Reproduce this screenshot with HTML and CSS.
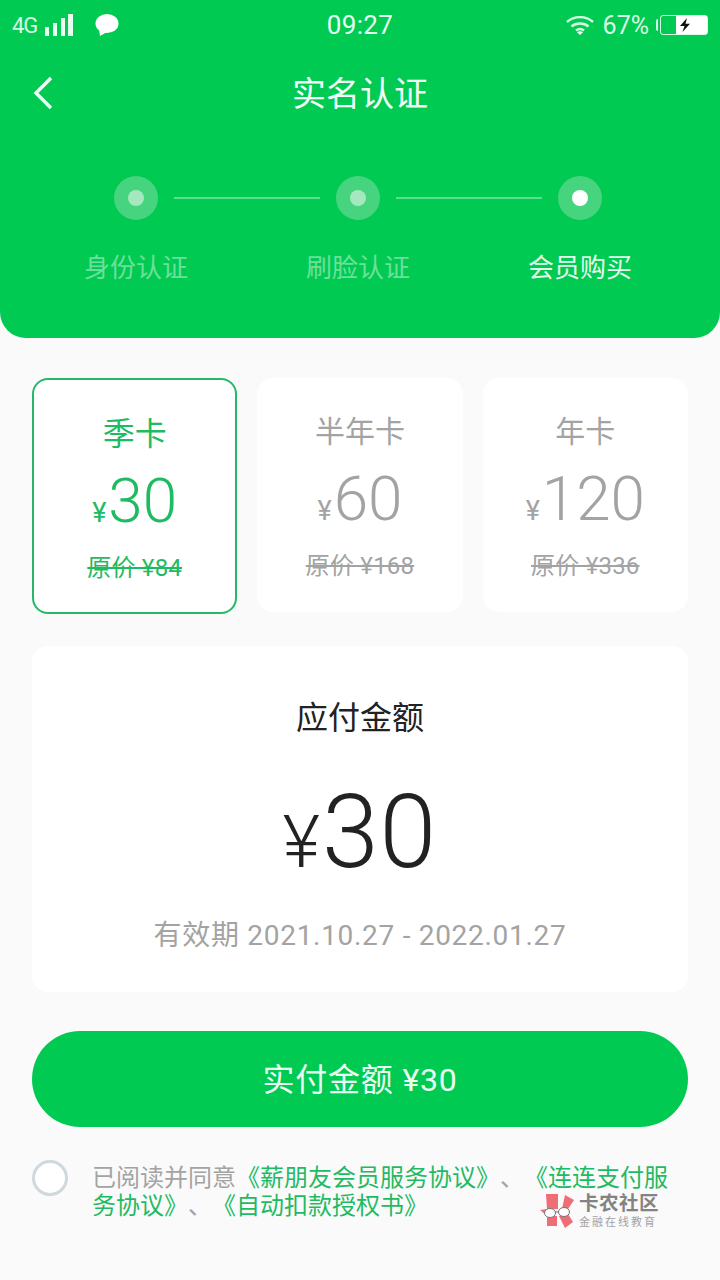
FILE: index.html
```html
<!DOCTYPE html>
<html lang="zh-CN">
<head>
    <meta charset="UTF-8">
    <meta name="viewport" content="width=device-width, initial-scale=1.0">
    <title>实名认证</title>
    <link rel="stylesheet" href="styles.css">
</head>
<body>

    <header class="header">
        <div class="status-bar">
            <div class="status-left">
                <span class="network">4G</span>
                <svg class="signal" width="28" height="22" viewBox="0 0 28 22">
                    <rect x="0" y="13" width="4" height="9" fill="#e6fff0"/>
                    <rect x="8" y="9" width="4" height="13" fill="#e6fff0"/>
                    <rect x="16" y="4" width="4" height="18" fill="#e6fff0"/>
                    <rect x="23" y="0" width="5" height="22" fill="#e6fff0"/>
                </svg>
                <svg class="bubble" width="24" height="22" viewBox="0 0 24 22">
                    <ellipse cx="12" cy="9.5" rx="11.5" ry="9.5" fill="#fff"/>
                    <path d="M4 15 L5 22 L12 18 Z" fill="#fff"/>
                </svg>
            </div>
            <div class="status-time">09:27</div>
            <div class="status-right">
                <svg class="wifi" width="28" height="20" viewBox="0 0 28 20">
                    <path d="M1 7 C8 0.5 20 0.5 27 7" fill="none" stroke="#d8fbe6" stroke-width="2.4"/>
                    <path d="M5.5 11.5 C10 7.5 18 7.5 22.5 11.5" fill="none" stroke="#d8fbe6" stroke-width="2.4"/>
                    <path d="M10 15.5 C12.5 13.5 15.5 13.5 18 15.5" fill="none" stroke="#d8fbe6" stroke-width="2.4"/>
                    <path d="M11 17.2 L14 20 L17 17.2 C15 16 13 16 11 17.2 Z" fill="#fff"/>
                </svg>
                <span class="battery-text">67%</span>
                <span class="battery-nub"></span>
                <div class="battery">
                    <div class="battery-fill">
                        <svg width="12" height="14" viewBox="0 0 12 14">
                            <path d="M8 0 L1 8 L5.5 8 L3.5 14 L11 5.8 L6.5 5.8 Z" fill="#111"/>
                        </svg>
                    </div>
                </div>
            </div>
        </div>

        <div class="nav-bar">
            <svg class="back" width="20" height="34" viewBox="0 0 20 34">
                <path d="M18 2 L3 17 L18 32" fill="none" stroke="#f2fff7" stroke-width="3.4"/>
            </svg>
            <h1 class="nav-title">实名认证</h1>
        </div>

        <div class="step-track">
            <div class="step-dot"><span class="step-core"></span></div>
            <div class="step-line"></div>
            <div class="step-dot"><span class="step-core"></span></div>
            <div class="step-line"></div>
            <div class="step-dot"><span class="step-core active"></span></div>
        </div>
        <div class="step-labels">
            <span>身份认证</span>
            <span>刷脸认证</span>
            <span class="active">会员购买</span>
        </div>
    </header>

    <section class="plans">
        <div class="plan selected">
            <div class="plan-name">季卡</div>
            <div class="plan-price"><span class="yen">¥</span>30</div>
            <div class="plan-origin">原价 ¥84</div>
        </div>
        <div class="plan">
            <div class="plan-name">半年卡</div>
            <div class="plan-price"><span class="yen">¥</span>60</div>
            <div class="plan-origin">原价 ¥168</div>
        </div>
        <div class="plan">
            <div class="plan-name">年卡</div>
            <div class="plan-price"><span class="yen">¥</span>120</div>
            <div class="plan-origin">原价 ¥336</div>
        </div>
    </section>

    <section class="summary">
        <div class="summary-title">应付金额</div>
        <div class="summary-price"><span class="summary-yen">¥</span>30</div>
        <div class="summary-date">有效期 2021.10.27 - 2022.01.27</div>
    </section>

    <button class="pay-btn">实付金额 ¥30</button>

    <div class="agree">
        <span class="agree-check"></span>
        <p class="agree-text">已阅读并同意<a>《薪朋友会员服务协议》</a>、<a>《连连支付服务协议》</a>、<a>《自动扣款授权书》</a></p>
    </div>

    <div class="watermark">
        <svg width="36" height="36" viewBox="0 0 36 36">
            <path d="M6 1 L18 1 L18 16 L7 16 Z" fill="#ee5f68"/>
            <path d="M22 16 L25 2 L34 7 L28 16 Z" fill="#ee5f68"/>
            <path d="M7 23 L17 23 L17 33 L7 33 Z" fill="#ee5f68"/>
            <path d="M19 23 L28 21 L33 29 L25 35 Z" fill="#ee5f68"/>
            <path d="M0 17 L7 16 L7 23 Z" fill="#ee5f68"/>
            <ellipse cx="10" cy="20" rx="5.5" ry="4.5" fill="#fff" stroke="#666" stroke-width="1"/>
            <ellipse cx="24" cy="19" rx="5.5" ry="4.5" fill="#fff" stroke="#666" stroke-width="1"/>
            <path d="M15 19 L19 19" fill="none" stroke="#666" stroke-width="1"/>
        </svg>
        <div class="watermark-text">
            <div class="watermark-name">卡农社区</div>
            <div class="watermark-sub">金融在线教育</div>
        </div>
    </div>

</body>
</html>
```

FILE: styles.css
```css
* {
    box-sizing: border-box;
}
html, body {
    margin: 0;
    height: 1280px;
    overflow: hidden;
}
body {
    position: relative;
    font-family: Roboto, "Noto Sans CJK SC", sans-serif;
    background: #fafafb;
    color: #222;
}
.header {
    height: 338px;
    background: #01ca53;
    border-radius: 0 0 26px 26px;
    color: #fff;
}
.status-bar {
    height: 50px;
    display: grid;
    grid-template-columns: 1fr auto 1fr;
    align-items: center;
    padding: 0 12px;
}
.status-left {
    display: flex;
    align-items: center;
}
.network {
    font-size: 22px;
    color: #d8fbe6;
    letter-spacing: -1px;
}
.signal {
    margin-left: 8px;
}
.bubble {
    margin-left: 22px;
}
.status-time {
    font-size: 26px;
    color: #e6fff0;
    letter-spacing: 0.4px;
}
.status-right {
    display: flex;
    align-items: center;
    justify-content: flex-end;
}
.battery-text {
    font-size: 25px;
    color: #d8fbe6;
    margin-left: 9px;
}
.battery-nub {
    width: 2px;
    height: 12px;
    margin-left: 7px;
    background: #d8fbe6;
    border-radius: 2px 0 0 2px;
}
.battery {
    width: 48px;
    height: 20px;
    margin-left: 2px;
    border: 1.5px solid #d8fbe6;
    border-radius: 3px;
    display: flex;
    justify-content: flex-end;
}
.battery-fill {
    width: 31px;
    background: #fff;
    display: flex;
    align-items: center;
    padding-left: 3px;
}
.nav-bar {
    height: 86px;
    display: flex;
    align-items: center;
    padding-left: 33px;
    position: relative;
}
.nav-title {
    position: absolute;
    left: 0;
    right: 0;
    margin: -4px 0 0;
    text-align: center;
    font-size: 34px;
    font-weight: 400;
    color: #f2fff7;
}
.step-track {
    display: flex;
    align-items: center;
    padding: 40px 0 0 114px;
}
.step-dot {
    width: 44px;
    height: 44px;
    border-radius: 50%;
    background: #46d47e;
    display: flex;
    align-items: center;
    justify-content: center;
}
.step-core {
    width: 16px;
    height: 16px;
    border-radius: 50%;
    background: #a5e8c0;
}
.step-core.active {
    background: #fff;
}
.step-line {
    width: 146px;
    height: 2px;
    margin: 0 16px;
    background: #58e08c;
}
.step-labels {
    display: grid;
    grid-template-columns: repeat(3, 222px);
    margin: 30px 0 0 25px;
    font-size: 26px;
    line-height: 36px;
    text-align: center;
    color: #6be09c;
}
.step-labels .active {
    color: #e2fbec;
}
.plans {
    display: grid;
    grid-template-columns: repeat(3, 1fr);
    gap: 20px;
    align-items: start;
    padding: 40px 32px 0;
}
.plan {
    height: 234px;
    padding-top: 36px;
    border-radius: 16px;
    background: #fff;
    text-align: center;
    color: #a3a3a3;
}
.plan.selected {
    height: 236px;
    border: 2px solid #25b866;
    color: #1fbb62;
}
.plan-name {
    font-size: 30px;
    line-height: 36px;
}
.selected .plan-name {
    font-size: 32px;
}
.plan-price {
    margin-top: 15px;
    font-size: 62px;
    font-weight: 300;
    line-height: 68px;
}
.yen {
    font-size: 27px;
    font-weight: 400;
    margin-right: 2px;
}
.plan-origin {
    margin-top: 5px;
    font-size: 24px;
    line-height: 32px;
    letter-spacing: 0.2px;
    text-decoration: line-through;
}
.summary {
    height: 346px;
    margin: 32px 32px 0;
    padding-top: 50px;
    background: #fff;
    border-radius: 16px;
    text-align: center;
}
.summary-title {
    font-size: 32px;
    line-height: 44px;
}
.summary-price {
    margin-top: 36px;
    font-size: 102px;
    font-weight: 300;
    line-height: 112px;
    letter-spacing: 1px;
}
.summary-yen {
    font-size: 72px;
    margin-right: 1px;
}
.summary-date {
    margin-top: 17px;
    font-size: 28px;
    line-height: 40px;
    color: #a3a3a3;
    letter-spacing: 0.7px;
}
.pay-btn {
    display: block;
    width: 656px;
    height: 96px;
    margin: 39px 32px 0;
    padding: 0 0 4px;
    border: none;
    border-radius: 48px;
    background: #01ca53;
    color: #eafff2;
    font-family: inherit;
    font-size: 32px;
    letter-spacing: 0.8px;
}
.agree {
    display: flex;
    margin: 33px 40px 0 32px;
}
.agree-check {
    flex: none;
    width: 36px;
    height: 36px;
    border: 3px solid #cfd8dc;
    border-radius: 50%;
    background: #fff;
}
.agree-text {
    margin: 4px 0 0 24px;
    font-size: 24px;
    line-height: 28px;
    color: #a3a3a3;
    text-spacing-trim: space-all;
}
.agree-text a {
    color: #1fbb62;
}
.watermark {
    position: absolute;
    left: 540px;
    top: 1192px;
    display: flex;
    align-items: center;
    gap: 3px;
    opacity: 0.9;
}
.watermark-name {
    font-size: 19.5px;
    line-height: 24px;
    font-weight: 700;
    color: #777;
    letter-spacing: 0.5px;
}
.watermark-sub {
    font-size: 11px;
    line-height: 14px;
    color: #999;
    letter-spacing: 2px;
}
```
